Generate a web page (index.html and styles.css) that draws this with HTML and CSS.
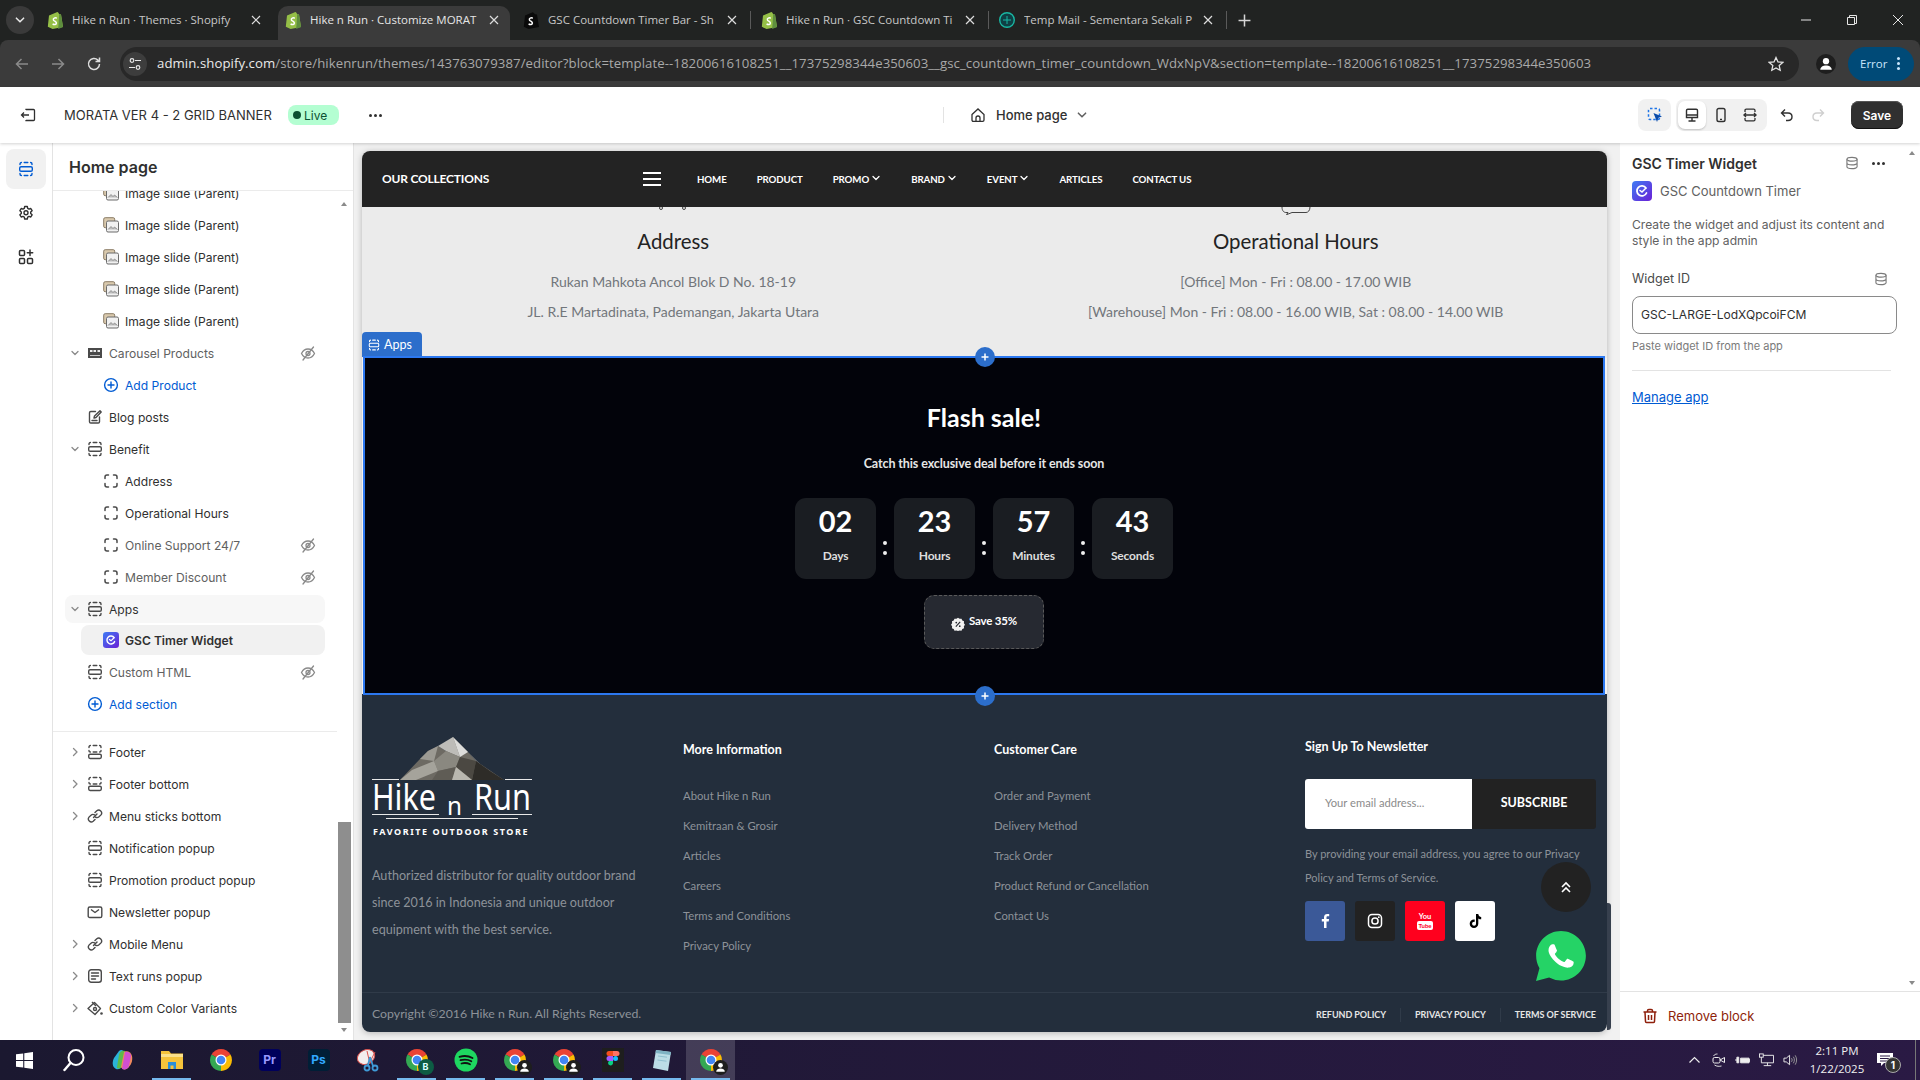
FILE: index.html
```html
<!DOCTYPE html>
<html lang="en">
<head>
<meta charset="utf-8">
<title>Hike n Run · Customize MORATA</title>
<link rel="stylesheet" href="styles.css">
</head>
<body>
<svg class="defs" aria-hidden="true">
  <symbol id="shop" viewBox="0 0 16 18"><path d="M2 4.500 9.800 1.200c.5-.2 1.200 0 1.600.5l.8 1.600 1.800.2L16 16 5.600 18 .8 15.800z" fill="#95bf47"/><path d="M12.200 3.300 14 3.500 16 16l-4.800 2z" fill="#5e8e3e"/><path d="M9.800 7.200C8 6.400 6 7.200 6.400 8.800c.3 1.400 3 1.500 3 3.200 0 1.500-2 1.900-3.800 1" fill="none" stroke="#fff" stroke-width="1.500"/></symbol>
  <symbol id="shopk" viewBox="0 0 16 18"><path d="M2 4.500 9.800 1.200l2.400 2.100 1.800.2L16 16 5.600 18 .8 15.800z" fill="#0a0a0a"/><path d="M9.800 7.200C8 6.400 6 7.200 6.400 8.800c.3 1.400 3 1.500 3 3.200 0 1.500-2 1.900-3.800 1" fill="none" stroke="#fff" stroke-width="1.500"/></symbol>
  <symbol id="x" viewBox="0 0 10 10"><path d="M1 1l8 8M9 1l-8 8" fill="none" stroke="currentColor" stroke-width="1.200"/></symbol>
  <symbol id="section" viewBox="0 0 16 16"><g fill="none" stroke="currentColor" stroke-width="1.400" stroke-linecap="round"><rect x="1.700" y="5.700" width="12.600" height="4.600" rx="1.400"/><path d="M2 3.500V3c0-1 .6-1.500 1.400-1.500M6.200 1.500h3.600M12.600 1.500c.8 0 1.400.5 1.400 1.500v.5M2 12.500v.5c0 1 .6 1.500 1.400 1.500M6.200 14.500h3.600M12.600 14.500c.8 0 1.400-.5 1.400-1.500v-.5"/></g></symbol>
  <symbol id="foot" viewBox="0 0 16 16"><g fill="none" stroke="currentColor" stroke-width="1.400" stroke-linecap="round"><rect x="1.700" y="10.200" width="12.600" height="4.300" rx="1.400"/><path d="M2 3.500V3c0-1 .6-1.500 1.400-1.500M6.200 1.500h3.600M12.600 1.500c.8 0 1.400.5 1.400 1.500v.5M2 6.500V7c0 .6.400 1 1.400 1M6.200 8h3.600M12.600 8c1 0 1.400-.4 1.400-1v-.5"/></g></symbol>
  <symbol id="block" viewBox="0 0 16 16"><path d="M5.500 2H4C2.800 2 2 2.800 2 4v1.500M10.500 2H12c1.200 0 2 .8 2 2v1.500M5.500 14H4c-1.200 0-2-.8-2-2v-1.500M10.500 14H12c1.200 0 2-.8 2-2v-1.500" fill="none" stroke="currentColor" stroke-width="1.500" stroke-linecap="round"/></symbol>
  <symbol id="imgs" viewBox="0 0 16 16"><rect x=".7" y=".7" width="11" height="10" rx="1.500" fill="#d9c9ad" stroke="#8a7c66"/><rect x="3.500" y="4" width="12" height="11" rx="1.500" fill="#f1f1f1" stroke="#6b6b6b"/><path d="M5 12.500l3-3 2 2 1.500-1.500 3 2.500" fill="#bbb" stroke="#777" stroke-width=".7"/></symbol>
  <symbol id="carousel" viewBox="0 0 16 16"><path d="M1 3h14v10H1z" fill="#4a4a4a"/><path d="M3 5h2.500v2H3zM6.500 5H9v2H6.500zM10.500 5H13v2h-2.500zM3 10h10v.8H3z" fill="#eee"/></symbol>
  <symbol id="plus" viewBox="0 0 16 16"><g fill="none" stroke="currentColor" stroke-width="1.400" stroke-linecap="round"><circle cx="8" cy="8" r="6.400"/><path d="M8 5v6M5 8h6"/></g></symbol>
  <symbol id="blog" viewBox="0 0 16 16"><g fill="none" stroke="currentColor" stroke-width="1.400" stroke-linecap="round" stroke-linejoin="round"><path d="M8.500 2.500H3.800c-.8 0-1.300.5-1.300 1.300v8.900c0 .8.500 1.300 1.300 1.300h7.400c.8 0 1.300-.5 1.300-1.300V8"/><path d="M7 9l.5-2L13 1.800l1.200 1.200L9 8.500zM5 11.500h5"/></g></symbol>
  <symbol id="eye" viewBox="0 0 16 16"><g fill="none" stroke="currentColor" stroke-width="1.300" stroke-linecap="round"><path d="M1.500 8.500C3 5.500 5.500 4 8 4s5 1.500 6.500 4.500C13 11.500 10.500 13 8 13S3 11.500 1.500 8.500z"/><circle cx="8" cy="8.500" r="2"/><path d="M13.500 2 3 15"/></g></symbol>
  <symbol id="chev" viewBox="0 0 10 10"><path d="M2 3.500 5 6.500 8 3.500" fill="none" stroke="currentColor" stroke-width="1.300" stroke-linecap="round" stroke-linejoin="round"/></symbol>
  <symbol id="chevr" viewBox="0 0 10 10"><path d="M3.500 1.500 7 5 3.500 8.500" fill="none" stroke="currentColor" stroke-width="1.300" stroke-linecap="round" stroke-linejoin="round"/></symbol>
  <symbol id="link" viewBox="0 0 16 16"><g fill="none" stroke="currentColor" stroke-width="1.400" stroke-linecap="round"><path d="M6.500 9.500 10 6"/><path d="M8 4.500l1.800-1.800a3 3 0 0 1 4.200 4.200L12 8.800a3 3 0 0 1-3.600.3"/><path d="M8 11.500l-1.800 1.800A3 3 0 0 1 2 9.100L4 7.200a3 3 0 0 1 3.600-.3"/></g></symbol>
  <symbol id="mail" viewBox="0 0 16 16"><g fill="none" stroke="currentColor" stroke-width="1.400" stroke-linejoin="round"><rect x="1.200" y="3" width="13.600" height="10.500" rx="1.600"/><path d="M4 5.500 8 8.500l4-3"/></g></symbol>
  <symbol id="text" viewBox="0 0 16 16"><g fill="none" stroke="currentColor" stroke-width="1.400" stroke-linecap="round"><rect x="1.700" y="1.700" width="12.600" height="12.600" rx="2.500"/><path d="M4.500 5h7M4.500 8h7M4.500 11h4"/></g></symbol>
  <symbol id="paint" viewBox="0 0 16 16"><g fill="none" stroke="currentColor" stroke-width="1.400" stroke-linejoin="round"><path d="M1 8.500 7.500 2.500l6 6L8 14.500z"/><path d="M5 2 9 6"/><circle cx="8" cy="9" r="1.500"/></g><circle cx="14.500" cy="13.500" r="1.300" fill="currentColor"/></symbol>
  <symbol id="gear" viewBox="0 0 16 16"><g fill="none" stroke="currentColor" stroke-width="1.400" stroke-linejoin="round"><path d="M6.700 1.500h2.600l.4 1.900 1.300.7 1.800-.6 1.300 2.200-1.400 1.300v1.500l1.400 1.300-1.300 2.200-1.800-.6-1.300.7-.4 1.900H6.700l-.4-1.900-1.300-.7-1.800.6-1.300-2.200L3.300 8.500V7L1.900 5.700l1.300-2.200 1.800.6 1.300-.7z"/><circle cx="8" cy="7.800" r="2"/></g></symbol>
  <symbol id="apps" viewBox="0 0 16 16"><g fill="none" stroke="currentColor" stroke-width="1.500" stroke-linecap="round"><rect x="1.500" y="1.500" width="5" height="5" rx="1"/><rect x="1.500" y="9.500" width="5" height="5" rx="1"/><rect x="9.500" y="9.500" width="5" height="5" rx="1"/><path d="M12 1v5.500M9.300 3.700h5.400"/></g></symbol>
  <symbol id="gsc" viewBox="0 0 20 20"><defs><linearGradient id="gscg" x1="0" y1="0" x2="1" y2="1"><stop offset="0" stop-color="#3f7cf4"/><stop offset="1" stop-color="#6a1fd6"/></linearGradient></defs><rect width="20" height="20" rx="4" fill="url(#gscg)"/><path d="M14 7a5 5 0 1 0 .5 5" fill="none" stroke="#fff" stroke-width="1.800" stroke-linecap="round"/><path d="M8 9.500 10 11l3.500-3.500" fill="none" stroke="#fff" stroke-width="1.500" stroke-linecap="round"/></symbol>
  <symbol id="db" viewBox="0 0 16 16"><g fill="none" stroke="currentColor" stroke-width="1.300"><ellipse cx="8" cy="3.700" rx="5.800" ry="2.200"/><path d="M2.200 3.700v8.600c0 1.200 2.600 2.200 5.800 2.200s5.800-1 5.800-2.200V3.700M2.200 8c0 1.200 2.600 2.200 5.800 2.200s5.800-1 5.800-2.200"/></g></symbol>
  <symbol id="chrome" viewBox="0 0 24 24"><path d="M12 12 2.500 6.500A11 11 0 0 1 21.500 6.500z" fill="#ea4335"/><path d="M12 12 21.500 6.500A11 11 0 0 1 12 23z" fill="#fbbc04"/><path d="M12 12V23A11 11 0 0 1 2.500 6.500z" fill="#34a853"/><circle cx="12" cy="12" r="5.500" fill="#fff"/><circle cx="12" cy="12" r="4.300" fill="#4285f4"/></symbol>
  <symbol id="badge" viewBox="0 0 14 14"><circle cx="7" cy="7" r="7" fill="#1e1e1e"/><circle cx="7" cy="5" r="2.200" fill="#fff"/><path d="M3 11c0-2 2-3 4-3s4 1 4 3z" fill="#fff"/></symbol>
  <symbol id="wa" viewBox="0 0 24 24"><path d="M12 0C5.400 0 .06 5.340.06 11.900c0 2.100.55 4.140 1.600 5.950L0 24l6.300-1.650a11.880 11.880 0 0 0 5.700 1.450c6.570 0 11.940-5.340 11.940-11.900C23.940 5.340 18.570 0 12 0z" fill="#25d366"/><path d="M17.472 14.382c-.297-.149-1.758-.867-2.030-.967-.273-.099-.471-.148-.67.15-.197.297-.767.966-.94 1.164-.173.199-.347.223-.644.075-.297-.15-1.255-.463-2.390-1.475-.883-.788-1.480-1.761-1.653-2.059-.173-.297-.018-.458.130-.606.134-.133.298-.347.446-.520.149-.174.198-.298.298-.497.099-.198.050-.371-.025-.520-.075-.149-.669-1.612-.916-2.207-.242-.579-.487-.500-.669-.510-.173-.008-.371-.010-.570-.010-.198 0-.520.074-.792.372-.272.297-1.040 1.016-1.040 2.479 0 1.462 1.065 2.875 1.213 3.074.149.198 2.096 3.200 5.077 4.487.709.306 1.262.489 1.694.625.712.227 1.360.195 1.871.118.571-.085 1.758-.719 2.006-1.413.248-.694.248-1.289.173-1.413-.074-.124-.272-.198-.570-.347" fill="#fff"/></symbol>
</svg>

<header class="chrome">
  <div class="tabstrip">
    <button class="tabmenu"><svg class="i10"><use href="#chev"/></svg></button>
    <div class="tab"><svg class="fav"><use href="#shop"/></svg><span class="tabt">Hike n Run · Themes · Shopify</span><svg class="tabx"><use href="#x"/></svg></div>
    <div class="tab active"><svg class="fav"><use href="#shop"/></svg><span class="tabt">Hike n Run · Customize MORAT</span><svg class="tabx"><use href="#x"/></svg></div>
    <div class="tab sep"><svg class="fav"><use href="#shopk"/></svg><span class="tabt">GSC Countdown Timer Bar - Sh</span><svg class="tabx"><use href="#x"/></svg></div>
    <div class="tab sep"><svg class="fav"><use href="#shop"/></svg><span class="tabt">Hike n Run · GSC Countdown Ti</span><svg class="tabx"><use href="#x"/></svg></div>
    <div class="tab sep"><svg class="fav" viewBox="0 0 16 16"><circle cx="8" cy="8" r="7.300" fill="#0f3f44" stroke="#19b7a3" stroke-width="1.400"/><path d="M4 8h8M8 4v8" stroke="#19b7a3"/></svg><span class="tabt">Temp Mail - Sementara Sekali P</span><svg class="tabx"><use href="#x"/></svg></div>
    <svg class="newtab" viewBox="0 0 12 12"><path d="M6 .5v11M.5 6h11" stroke="#d5d5d5" stroke-width="1.400"/></svg>
    <div class="winctl">
      <svg viewBox="0 0 12 12"><path d="M1 6h10" stroke="#e6e6e6"/></svg>
      <svg viewBox="0 0 12 12"><path d="M3.500 3.500V1.500h7v8h-2M1.500 3.500h7v7h-7z" fill="none" stroke="#e6e6e6"/></svg>
      <svg viewBox="0 0 12 12"><path d="M1 1l10 10M11 1 1 11" stroke="#e6e6e6"/></svg>
    </div>
  </div>
  <div class="toolbar">
    <svg class="nav-i dim" viewBox="0 0 16 16"><path d="M14 8H2.500M7.500 3l-5 5 5 5" fill="none" stroke="currentColor" stroke-width="1.500"/></svg>
    <svg class="nav-i dim" viewBox="0 0 16 16"><path d="M2 8h11.500M8.500 3l5 5-5 5" fill="none" stroke="currentColor" stroke-width="1.500"/></svg>
    <svg class="nav-i" viewBox="0 0 16 16"><path d="M13.500 8a5.500 5.500 0 1 1-1.600-3.900L13.500 5.500M13.500 1.500v4h-4" fill="none" stroke="currentColor" stroke-width="1.500"/></svg>
    <div class="omni">
      <span class="tune"><svg viewBox="0 0 14 14"><g fill="none" stroke="#e6e6e6" stroke-width="1.200"><circle cx="4" cy="3.500" r="1.800"/><path d="M7 3.500h6M1 10.500h6"/><circle cx="10" cy="10.500" r="1.800"/></g></svg></span>
      <span class="url"><b>admin.shopify.com</b>/store/hikenrun/themes/143763079387/editor?block=template--18200616108251__17375298344e350603__gsc_countdown_timer_countdown_WdxNpV&amp;section=template--18200616108251__17375298344e350603</span>
      <svg class="star" viewBox="0 0 16 16"><path d="M8 1.500l2 4.400 4.800.5-3.600 3.200 1 4.700L8 11.900l-4.200 2.400 1-4.700L1.200 6.400 6 5.900z" fill="none" stroke="#e3e3e3" stroke-width="1.300"/></svg>
    </div>
    <svg class="profile"><use href="#badge"/></svg>
    <div class="errpill"><span>Error</span><span class="vdots"></span></div>
  </div>
</header>

<div class="appbar">
  <svg class="exit" viewBox="0 0 16 16"><path d="M6 3V2.500h7.500c.6 0 1 .4 1 1v9c0 .6-.4 1-1 1H6V13M9 8H1.500M4 5.500 1.500 8 4 10.500" fill="none" stroke="#303030" stroke-width="1.300"/></svg>
  <span class="themename">MORATA VER 4 - 2 GRID BANNER</span>
  <span class="live"><i></i>Live</span>
  <span class="dots"><i></i><i></i><i></i></span>
  <span class="vrule"></span>
  <svg class="home" viewBox="0 0 16 16"><path d="M2 7.500 8 2l6 5.500V13c0 .8-.5 1.300-1.300 1.300H3.300C2.500 14.300 2 13.800 2 13zM6 14v-3c0-1.300.8-2 2-2s2 .7 2 2v3" fill="none" stroke="#303030" stroke-width="1.300"/></svg>
  <span class="pagename">Home page</span>
  <svg class="pagechev"><use href="#chev"/></svg>
  <div class="tools">
    <span class="tool-sel"><svg viewBox="0 0 16 16"><rect x="1.500" y="1.500" width="11" height="11" rx="1.500" fill="none" stroke="#1f75e8" stroke-width="1.500" stroke-dasharray="2.500 2"/><path d="M6.500 6 15 9.500l-3.500 1.200L10 15z" fill="#0b4ba8"/></svg></span>
    <span class="seg">
      <span class="seg-on"><svg viewBox="0 0 16 16"><path d="M2.500 3.500c0-.8.500-1.300 1.300-1.300h8.400c.8 0 1.300.5 1.300 1.300v7H2.500zM2.500 8h11M8 10.500v3M4.500 14h7" fill="none" stroke="#303030" stroke-width="1.400"/></svg></span>
      <span class="seg-i"><svg viewBox="0 0 16 16"><rect x="4" y="1.500" width="8" height="13" rx="1.800" fill="none" stroke="#303030" stroke-width="1.400"/><path d="M7 12.300h2" stroke="#303030" stroke-width="1.200"/></svg></span>
      <span class="seg-i"><svg viewBox="0 0 16 16"><path d="M3 5V3.500c0-.8.500-1.300 1.300-1.300h7.400c.8 0 1.300.5 1.300 1.300V5M3 11v1.500c0 .8.500 1.300 1.300 1.300h7.400c.8 0 1.300-.5 1.300-1.300V11M1.500 8h13M4 6 2 8l2 2M12 6l2 2-2 2" fill="none" stroke="#303030" stroke-width="1.300"/></svg></span>
    </span>
    <svg class="undo" viewBox="0 0 16 16"><path d="M6 2.500 2.500 6 6 9.500M3 6h6c2.500 0 4 1.500 4 3.800S11.500 13.500 9 13.500H7" fill="none" stroke="#303030" stroke-width="1.400"/></svg>
    <svg class="redo" viewBox="0 0 16 16"><path d="M10 2.500 13.500 6 10 9.500M13 6H7C4.500 6 3 7.500 3 9.800s1.500 3.700 4 3.700h2" fill="none" stroke="#cfcfcf" stroke-width="1.400"/></svg>
    <button class="save">Save</button>
  </div>
</div>

<main class="main">
  <nav class="rail">
    <span class="rail-on"><svg class="i16 blue"><use href="#section"/></svg></span>
    <span class="rail-i"><svg class="i16"><use href="#gear"/></svg></span>
    <span class="rail-i"><svg class="i16"><use href="#apps"/></svg></span>
  </nav>

  <aside class="sidebar">
    <h2 class="side-title">Home page</h2>
    <div class="tree">
      <div class="tree-in">
        <div class="row l2"><svg class="ic"><use href="#imgs"/></svg><span>Image slide (Parent)</span></div>
        <div class="row l2"><svg class="ic"><use href="#imgs"/></svg><span>Image slide (Parent)</span></div>
        <div class="row l2"><svg class="ic"><use href="#imgs"/></svg><span>Image slide (Parent)</span></div>
        <div class="row l2"><svg class="ic"><use href="#imgs"/></svg><span>Image slide (Parent)</span></div>
        <div class="row l2"><svg class="ic"><use href="#imgs"/></svg><span>Image slide (Parent)</span></div>
        <div class="row muted"><svg class="tw"><use href="#chev"/></svg><svg class="ic"><use href="#carousel"/></svg><span>Carousel Products</span><svg class="eye"><use href="#eye"/></svg></div>
        <div class="row l2 add"><svg class="ic"><use href="#plus"/></svg><span>Add Product</span></div>
        <div class="row l1"><svg class="ic"><use href="#blog"/></svg><span>Blog posts</span></div>
        <div class="row"><svg class="tw"><use href="#chev"/></svg><svg class="ic"><use href="#section"/></svg><span>Benefit</span></div>
        <div class="row l2"><svg class="ic"><use href="#block"/></svg><span>Address</span></div>
        <div class="row l2"><svg class="ic"><use href="#block"/></svg><span>Operational Hours</span></div>
        <div class="row l2 muted"><svg class="ic"><use href="#block"/></svg><span>Online Support 24/7</span><svg class="eye"><use href="#eye"/></svg></div>
        <div class="row l2 muted"><svg class="ic"><use href="#block"/></svg><span>Member Discount</span><svg class="eye"><use href="#eye"/></svg></div>
        <div class="row parent"><svg class="tw"><use href="#chev"/></svg><svg class="ic"><use href="#section"/></svg><span>Apps</span></div>
        <div class="row l2 current"><svg class="ic"><use href="#gsc"/></svg><span>GSC Timer Widget</span></div>
        <div class="row l1 muted"><svg class="ic"><use href="#section"/></svg><span>Custom HTML</span><svg class="eye"><use href="#eye"/></svg></div>
        <div class="row l1 add"><svg class="ic"><use href="#plus"/></svg><span>Add section</span></div>
        <hr class="tree-rule">
        <div class="row"><svg class="tw"><use href="#chevr"/></svg><svg class="ic"><use href="#foot"/></svg><span>Footer</span></div>
        <div class="row"><svg class="tw"><use href="#chevr"/></svg><svg class="ic"><use href="#foot"/></svg><span>Footer bottom</span></div>
        <div class="row"><svg class="tw"><use href="#chevr"/></svg><svg class="ic"><use href="#link"/></svg><span>Menu sticks bottom</span></div>
        <div class="row l1"><svg class="ic"><use href="#section"/></svg><span>Notification popup</span></div>
        <div class="row l1"><svg class="ic"><use href="#section"/></svg><span>Promotion product popup</span></div>
        <div class="row l1"><svg class="ic"><use href="#mail"/></svg><span>Newsletter popup</span></div>
        <div class="row"><svg class="tw"><use href="#chevr"/></svg><svg class="ic"><use href="#link"/></svg><span>Mobile Menu</span></div>
        <div class="row"><svg class="tw"><use href="#chevr"/></svg><svg class="ic"><use href="#text"/></svg><span>Text runs popup</span></div>
        <div class="row"><svg class="tw"><use href="#chevr"/></svg><svg class="ic"><use href="#paint"/></svg><span>Custom Color Variants</span></div>
      </div>
      <div class="sbar"><i class="up"></i><i class="thumb"></i><i class="down"></i></div>
    </div>
  </aside>

  <section class="preview">
    <div class="card">
      <div class="sitebar">
        <span class="brand">OUR COLLECTIONS</span>
        <span class="burger"><i></i><i></i><i></i></span>
        <ul class="sitenav">
          <li>HOME</li><li>PRODUCT</li>
          <li>PROMO<svg><use href="#chev"/></svg></li>
          <li>BRAND<svg><use href="#chev"/></svg></li>
          <li>EVENT<svg><use href="#chev"/></svg></li>
          <li>ARTICLES</li><li>CONTACT US</li>
        </ul>
      </div>

      <div class="benefit">
        <div class="bcol">
          <svg class="peek" viewBox="0 0 40 8"><g fill="none" stroke="#444"><circle cx="8" cy="1" r="1.500"/><circle cx="31" cy="1" r="1.500"/></g></svg>
          <h3>Address</h3>
          <p>Rukan Mahkota Ancol Blok D No. 18-19</p>
          <p>JL. R.E Martadinata, Pademangan, Jakarta Utara</p>
        </div>
        <div class="bcol">
          <svg class="peek" viewBox="0 0 40 8"><path d="M6 0c0 4 2 5.500 4 5.500H12l-1.500 2.200 5.500-2.200H30c2 0 4-2 4-5.500" fill="none" stroke="#444"/></svg>
          <h3>Operational Hours</h3>
          <p>[Office] Mon - Fri : 08.00 - 17.00 WIB</p>
          <p>[Warehouse] Mon - Fri : 08.00 - 16.00 WIB, Sat : 08.00 - 14.00 WIB</p>
        </div>
      </div>

      <div class="timer">
        <span class="apps-tag"><svg viewBox="0 0 16 16"><use href="#section"/></svg>Apps</span>
        <span class="addbtn top"><svg viewBox="0 0 10 10"><path d="M5 1.500v7M1.500 5h7" stroke="#fff" stroke-width="1.500"/></svg></span>
        <span class="addbtn bottom"><svg viewBox="0 0 10 10"><path d="M5 1.500v7M1.500 5h7" stroke="#fff" stroke-width="1.500"/></svg></span>
        <span class="selbox"></span>
        <h2 class="flash">Flash sale!</h2>
        <p class="catch">Catch this exclusive deal before it ends soon</p>
        <div class="count">
          <div class="cbox"><b>02</b><span>Days</span></div><i class="colon"></i>
          <div class="cbox"><b>23</b><span>Hours</span></div><i class="colon"></i>
          <div class="cbox"><b>57</b><span>Minutes</span></div><i class="colon"></i>
          <div class="cbox"><b>43</b><span>Seconds</span></div>
        </div>
        <div class="savebtn"><svg viewBox="0 0 16 16"><path d="M8 .8l1.800 1.300 2.200-.2.900 2 2 .9-.2 2.200L16 8.800l-1.300 1.800.2 2.200-2 .9-.9 2-2.200-.2L8 16l-1.800-.5-2.200.2-.9-2-2-.9.2-2.200L0 8.800l1.300-1.800-.2-2.200 2-.9.9-2 2.200.2z" fill="#f2f2f2"/><path d="M5.500 11 10.500 5.500" stroke="#262931" stroke-width="1.300"/><circle cx="6" cy="6.300" r="1" fill="#262931"/><circle cx="10" cy="10.500" r="1" fill="#262931"/></svg><span>Save 35%</span></div>
      </div>

      <footer class="sitefoot">
        <div class="fgrid">
          <div class="fabout">
            <svg class="logo" viewBox="0 0 160 104">
              <path d="M28 43 48 22 56 14 66 9 74 14 81 0 96 15 104 24 132 43z" fill="#6d6a63"/>
              <path d="M66 9 81 0 88 20 74 14z" fill="#bdbcb8"/><path d="M81 0 96 15 88 20z" fill="#dcdcda"/><path d="M56 14 66 9 62 24 48 22z" fill="#9c9a93"/>
              <path d="M62 24 74 14 88 20 84 30 66 34z" fill="#8a8880"/><path d="M88 20 104 24 100 43 84 30z" fill="#4b4842"/><path d="M96 15 110 29 104 24z" fill="#888"/><path d="M104 24 118 34 132 43H100z" fill="#2e2c28"/><path d="M40 33 62 24 66 34 44 43H28z" fill="#a5a39b"/><path d="M66 34 84 30 80 43H60z" fill="#5f5c55"/><path d="M84 30 100 43H80z" fill="#b9b7af"/>
              <path d="M0 42.500h27M133 42.500h27M0 77.500h67M100 77.500h60M14 81.500h132" stroke="#e8e8e8" stroke-width="1"/>
              <text class="lg-main" x="0" y="73" textLength="64" lengthAdjust="spacingAndGlyphs">Hike</text><text class="lg-n" x="75" y="78" textLength="15" lengthAdjust="spacingAndGlyphs">n</text><text class="lg-main" x="102" y="73" textLength="57" lengthAdjust="spacingAndGlyphs">Run</text>
              <text class="lg-sub" x="1" y="98" textLength="156">FAVORITE OUTDOOR STORE</text>
            </svg>
            <p>Authorized distributor for quality outdoor brand since 2016 in Indonesia and unique outdoor equipment with the best service.</p>
          </div>
          <div class="fcol">
            <h4>More Information</h4>
            <ul><li>About Hike n Run</li><li>Kemitraan &amp; Grosir</li><li>Articles</li><li>Careers</li><li>Terms and Conditions</li><li>Privacy Policy</li></ul>
          </div>
          <div class="fcol">
            <h4>Customer Care</h4>
            <ul><li>Order and Payment</li><li>Delivery Method</li><li>Track Order</li><li>Product Refund or Cancellation</li><li>Contact Us</li></ul>
          </div>
          <div class="fnews">
            <h4>Sign Up To Newsletter</h4>
            <div class="subform"><span class="ph">Your email address...</span><span class="subbtn">SUBSCRIBE</span></div>
            <p>By providing your email address, you agree to our Privacy Policy and Terms of Service.</p>
            <div class="social">
              <span class="s-fb"><svg viewBox="0 0 16 16"><path d="M9.500 15V8.600h2.200l.4-2.500H9.500V4.500c0-.8.300-1.300 1.400-1.300h1.300V1c-.4 0-1.100-.1-1.900-.1-2 0-3.300 1.200-3.300 3.300v1.900H4.800v2.500H7V15z" fill="#fff"/></svg></span>
              <span class="s-ig"><svg viewBox="0 0 16 16"><g fill="none" stroke="#fff" stroke-width="1.500"><rect x="1.500" y="1.500" width="13" height="13" rx="3.500"/><circle cx="8" cy="8" r="3.100"/></g><circle cx="11.800" cy="4.200" r=".9" fill="#fff"/></svg></span>
              <span class="s-yt"><em>You</em><strong>Tube</strong></span>
              <span class="s-tt"><svg viewBox="0 0 16 16"><path d="M9 1h2.300c.2 1.700 1.200 2.800 2.900 3v2.300c-1.100 0-2.100-.3-2.900-.9v5.300c0 2.600-2 4.300-4.300 4.300-2.500 0-4.300-2-4.300-4.300 0-2.600 2.200-4.600 5-4.200v2.400c-1.400-.4-2.600.6-2.600 1.800 0 1.100.9 2 2 2 1.200 0 1.900-.9 1.900-2z" fill="#000"/></svg></span>
            </div>
          </div>
        </div>
        <div class="fbottom">
          <span>Copyright ©2016 Hike n Run. All Rights Reserved.</span>
          <ul><li>REFUND POLICY</li><li>PRIVACY POLICY</li><li>TERMS OF SERVICE</li></ul>
        </div>
        <span class="totop"><svg viewBox="0 0 14 14"><path d="M3 7l4-4 4 4M3 12l4-4 4 4" fill="none" stroke="#fff" stroke-width="1.600"/></svg></span>
        <svg class="whats"><use href="#wa"/></svg>
      </footer>
      <span class="pagebar"></span>
    </div>
  </section>

  <aside class="inspector">
    <div class="ins-body">
      <div class="ins-head"><h3>GSC Timer Widget</h3><svg class="i14 grey"><use href="#db"/></svg><span class="dots"><i></i><i></i><i></i></span></div>
      <div class="ins-app"><svg class="i20"><use href="#gsc"/></svg><span>GSC Countdown Timer</span></div>
      <p class="ins-desc">Create the widget and adjust its content and style in the app admin</p>
      <div class="ins-label"><span>Widget ID</span><svg class="i14 grey"><use href="#db"/></svg></div>
      <div class="ins-input">GSC-LARGE-LodXQpcoiFCM</div>
      <p class="ins-help">Paste widget ID from the app</p>
      <hr class="ins-rule">
      <a class="ins-link">Manage app</a>
      <i class="arrow-up"></i><i class="arrow-down"></i>
    </div>
    <div class="ins-foot"><svg viewBox="0 0 16 16"><path d="M1.500 4h13M5.500 4V2.800c0-.8.500-1.300 1.300-1.300h2.400c.8 0 1.300.5 1.300 1.300V4M3 4l.5 9.500c0 .6.500 1 1 1h7c.5 0 1-.4 1-1L13 4M6.500 7v5M9.500 7v5" fill="none" stroke="#8e1f0b" stroke-width="1.500"/></svg><span>Remove block</span></div>
  </aside>
</main>

<footer class="taskbar">
  <span class="tb"><svg class="win" viewBox="0 0 16 16"><path d="M0 2.200 6.800 1.300V7.500H0zM7.800 1.100 16 0V7.500H7.800zM0 8.500H6.800V14.700L0 13.800zM7.800 8.500H16V16L7.800 14.900z" fill="#fff"/></svg></span>
  <span class="tb"><svg class="t24" viewBox="0 0 24 24"><circle cx="14" cy="9.500" r="7.500" fill="none" stroke="#fff" stroke-width="2"/><path d="M8.500 15 2.500 22" stroke="#fff" stroke-width="2.400" stroke-linecap="round"/></svg></span>
  <span class="tb"><svg class="t24" viewBox="0 0 24 24"><path d="M8 3c2-2 5-1 5 2l-2 12c-.5 3-3 5-6 4-4-2-4-7-2-11z" fill="#2bb3d9"/><path d="M6 19 8 7c.5-3 3-5 6-4l1 1-3 13c-.5 3-3 4-6 3z" fill="#5dbb4a"/><path d="M13 4c3-2 7 0 8 4 1 5-1 9-4 12-2 2-6 2-7-1z" fill="#f08a5d"/><path d="M14 4c3-1 6 1 6 4l-2 10c-1 3-4 4-7 3z" fill="#d14fd0"/></svg></span>
  <span class="tb on"><svg class="t24" viewBox="0 0 24 24"><path d="M1 3h8l2 2.500h12V21H1z" fill="#f5c33b"/><path d="M1 6h22v3H1z" fill="#fbe08a"/><path d="M8 14h8v7h-2.500v-3.500h-3V21H8z" fill="#2a8fd8"/></svg></span>
  <span class="tb"><svg class="t24"><use href="#chrome"/></svg></span>
  <span class="tb"><span class="adobe pr">Pr</span></span>
  <span class="tb"><span class="adobe ps">Ps</span></span>
  <span class="tb"><svg class="t24" viewBox="0 0 24 24"><ellipse cx="10" cy="9" rx="9" ry="7" fill="#f3eeee" stroke="#d9534f" transform="rotate(-25 10 9)"/><path d="M11 3l3 13M19 4 13 16" stroke="#d9534f" fill="none"/><g fill="none" stroke="#3f9ad6" stroke-width="1.800"><circle cx="11" cy="20" r="2.500"/><circle cx="19" cy="20" r="2.500"/><path d="M14 9l3 9M14 9l-2 8"/></g></svg></span>
  <span class="tb on"><span class="tbw"><svg class="t24"><use href="#chrome"/></svg><span class="tbadge green">B</span></span></span>
  <span class="tb on"><svg class="t24" viewBox="0 0 24 24"><circle cx="12" cy="12" r="11.500" fill="#1ed760"/><path d="M5.500 8.800c4.500-1.300 9-1 13 1.200M6.500 12.200c3.800-1 7.500-.8 10.800 1M7.500 15.500c3-.8 6-.6 8.500.8" fill="none" stroke="#111" stroke-width="1.800" stroke-linecap="round"/></svg></span>
  <span class="tb on"><span class="tbw"><svg class="t24"><use href="#chrome"/></svg><svg class="tprof"><use href="#badge"/></svg></span></span>
  <span class="tb on"><span class="tbw"><svg class="t24"><use href="#chrome"/></svg><svg class="tprof"><use href="#badge"/></svg></span></span>
  <span class="tb on"><svg class="t24" viewBox="0 0 24 24"><rect x="1" y="0" width="22" height="24" fill="#1e1e1e"/><path d="M8 3h4v5H8a2.500 2.500 0 0 1 0-5z" fill="#f24e1e"/><path d="M12 3h4a2.500 2.500 0 0 1 0 5h-4z" fill="#ff7262"/><path d="M8 8h4v5H8a2.500 2.500 0 0 1 0-5z" fill="#a259ff"/><circle cx="14.500" cy="10.500" r="2.500" fill="#1abcfe"/><path d="M8 13h4v2.500a2.500 2.500 0 1 1-4-2.500z" fill="#0acf83"/></svg></span>
  <span class="tb on"><svg class="t24" viewBox="0 0 24 24"><path d="M6 2 21 4 18 23 3 20z" fill="#bcdde6"/><path d="M6 2 21 4 20.500 7 5.500 5z" fill="#7fb3c4"/><path d="M8 8l9 1.200M7.500 12l9 1.200" stroke="#8fc0cf"/></svg></span>
  <span class="tb on act"><span class="tbw"><svg class="t24"><use href="#chrome"/></svg><svg class="tprof"><use href="#badge"/></svg></span></span>
  <span class="tray">
    <svg viewBox="0 0 14 14"><path d="M2 9.500 7 4.500l5 5" fill="none" stroke="#eee" stroke-width="1.200"/></svg>
    <svg viewBox="0 0 14 14"><path d="M2 3c1-1.500 2-2 4-2M10 13c-2 .5-5 .5-7-1" fill="none" stroke="#ddd"/><rect x="1.500" y="4.500" width="7" height="5.500" rx="1.500" fill="none" stroke="#eee"/><path d="M8.500 7 13 4.500v5z" fill="none" stroke="#eee"/></svg>
    <svg viewBox="0 0 16 14"><path d="M0 7h2M2 4h2v6H2zM6 5h9v5H6z" fill="#eee" stroke="#eee"/><path d="M15.500 6v3" stroke="#eee"/></svg>
    <svg viewBox="0 0 16 14"><path d="M2.500 2h13v8h-13zM9 10v3M5 13h8" fill="none" stroke="#eee"/><rect x=".5" y=".5" width="4" height="3.500" fill="#2a1a44" stroke="#eee"/></svg>
    <svg viewBox="0 0 16 14"><path d="M1 5h2.500L7 2v10L3.500 9H1z" fill="none" stroke="#eee"/><path d="M9 5c1 1 1 3 0 4M11 3.500c1.500 2 1.500 5 0 7M13 2c2 3 2 7 0 10" fill="none" stroke="#999"/></svg>
  </span>
  <span class="clock"><span>2:11 PM</span><span>1/22/2025</span></span>
  <span class="notif"><svg viewBox="0 0 16 16"><path d="M0 1h16v10H7l-3 3v-3H0z" fill="#fff"/><path d="M3 4h10M3 6.500h10M3 9h7" stroke="#2a1a44"/></svg><b>1</b></span>
  <span class="showdesk"></span>
</footer>
</body>
</html>
```
FILE: styles.css
```css
* { box-sizing: border-box; }
html, body { margin: 0; height: 100%; }
body { width: 1920px; height: 1080px; overflow: hidden; display: flex; flex-direction: column; font-family: "Inter", "Liberation Sans", sans-serif; background: #fff; color: #303030; }
h2, h3, h4, p, ul { margin: 0; padding: 0; }
ul { list-style: none; }
svg { display: block; flex: none; }
.defs { position: absolute; width: 0; height: 0; }

/* browser chrome */
.chrome { height: 87px; background: #212322; flex: none; }
.tabstrip { height: 40px; display: flex; padding-left: 6px; align-items: flex-end; position: relative; }
.tabmenu { width: 28px; height: 28px; margin: 0 6px 6px 0; border: 0; border-radius: 50%; background: #3a3a3a; color: #e8e8e8; display: flex; align-items: center; justify-content: center; padding: 0; }
.i10 { width: 12px; height: 12px; }
.tab { width: 238px; height: 34px; display: flex; align-items: center; padding: 0 0 6px 7px; color: #c7c7c7; font: 11.500px/16px "Open Sans", "Liberation Sans", sans-serif; position: relative; }
.tab.active { background: #3b3b3b; border-radius: 10px 10px 0 0; width: 232px; margin-right: 6px; color: #e6e6e6; }
.tab.sep::after { content: ""; position: absolute; right: 3px; top: 5px; height: 18px; width: 1px; background: #5a5a5a; }
.fav { width: 16px; height: 18px; margin-right: 9px; }
.tabt { width: 173px; white-space: nowrap; overflow: hidden; }
.tabx { width: 10px; height: 10px; margin-left: 6px; color: #ddd; }
.newtab { width: 13px; height: 13px; margin: 0 0 13px 8px; }
.winctl { margin-left: auto; display: flex; gap: 34px; padding: 0 16px 14px 0; }
.winctl svg { width: 12px; height: 12px; }
.toolbar { height: 47px; background: #3b3b3b; display: flex; align-items: center; padding-left: 14px; border-radius: 8px 8px 0 0; }
.nav-i { width: 16px; height: 16px; margin-right: 20px; color: #dedede; }
.nav-i.dim { color: #8a8a8a; }
.omni { margin-left: -2px; width: 1679px; height: 34px; border-radius: 17px; background: #282828; display: flex; align-items: center; padding-left: 3px; }
.tune { width: 24px; height: 24px; border-radius: 50%; background: #3d3d3d; display: flex; align-items: center; justify-content: center; margin-right: 10px; }
.tune svg { width: 14px; height: 14px; }
.url { color: #a9a9a9; font: 13.200px/18px "Open Sans", "Liberation Sans", sans-serif; white-space: nowrap; letter-spacing: .005em; margin-top: -1px; }
.url b { font-weight: 400; color: #eaeaea; }
.star { width: 16px; height: 16px; margin-left: auto; margin-right: 15px; }
.profile { width: 20px; height: 20px; margin-left: 17px; }
.errpill { margin-left: 12px; width: 66px; height: 34px; border-radius: 17px; background: #004a77; color: #c9e6fc; font: 11.500px "Open Sans", sans-serif; display: flex; align-items: center; padding-left: 12px; justify-content: space-between; padding-right: 14px; }
.vdots { width: 3px; height: 3px; border-radius: 50%; background: #c9e6fc; box-shadow: 0 -5px #c9e6fc, 0 5px #c9e6fc; }

/* app bar */
.appbar { height: 56px; flex: none; display: flex; align-items: center; padding-left: 20px; position: relative; z-index: 2; box-shadow: 0 1px 3px rgba(0,0,0,.18); background: #fff; font-size: 13px; }
.exit { width: 16px; height: 16px; }
.themename { margin-left: 28px; width: 208px; white-space: nowrap; font-size: 13px; }
.live { margin-left: 16px; height: 20px; width: 51px; border-radius: 8px; background: #b4fed2; color: #0c5132; display: flex; align-items: center; font-size: 12px; padding-left: 5px; gap: 3px; }
.live i { width: 8px; height: 8px; border-radius: 50%; background: #0c5132; }
.dots { display: flex; gap: 2px; }
.dots i { width: 3px; height: 3px; border-radius: 50%; background: #303030; }
.appbar > .dots { margin-left: 30px; }
.vrule { width: 1px; height: 16px; background: #e3e3e3; margin-left: 561px; }
.home { width: 16px; height: 16px; margin-left: 26px; }
.pagename { margin-left: 10px; width: 71px; white-space: nowrap; font-weight: 500; font-size: 13px; }
.pagechev { width: 12px; height: 12px; margin-left: 9px; color: #616161; }
.tools { margin-left: auto; display: flex; align-items: center; padding-right: 17px; }
.tool-sel { width: 33px; height: 32px; background: #f1f1f1; border-radius: 8px; display: flex; align-items: center; justify-content: center; }
.tool-sel svg, .seg svg { width: 16px; height: 16px; }
.seg { margin-left: 5px; width: 91px; height: 32px; background: #f1f1f1; border-radius: 8px; display: flex; align-items: center; padding: 2px; }
.seg-on { width: 28px; height: 28px; background: #fff; border-radius: 7px; box-shadow: 0 1px 2px rgba(0,0,0,.2); display: flex; align-items: center; justify-content: center; }
.seg-i { width: 30px; display: flex; justify-content: center; }
.undo, .redo { width: 16px; height: 16px; }
.undo { margin-left: 12px; }
.redo { margin-left: 15px; }
.save { margin-left: 25px; width: 52px; height: 28px; border: 0; border-radius: 8px; background: #303030; box-shadow: inset 0 1px 0 #555, inset 0 -1px 0 #111; color: #fff; font: 600 12px "Inter", sans-serif; padding: 0; }

/* main */
.main { height: 897px; flex: none; display: flex; background: #f1f1f1; }
.rail { width: 53px; background: #fff; border-right: 1px solid #e3e3e3; display: flex; flex-direction: column; align-items: center; padding-top: 6px; gap: 4px; }
.rail-on, .rail-i { width: 40px; height: 40px; border-radius: 8px; display: flex; align-items: center; justify-content: center; }
.rail-on { background: #f1f1f1; }
.i16 { width: 16px; height: 16px; }
.blue { color: #005bd3; }

.sidebar { width: 301px; background: #fff; border-right: 1px solid #e3e3e3; display: flex; flex-direction: column; }
.side-title { height: 48px; padding-left: 16px; font-size: 16px; line-height: 48px; font-weight: 600; border-bottom: 1px solid #ebebeb; flex: none; }
.tree { flex: 1; position: relative; overflow: hidden; font-size: 12.100px; color: #303030; }
.tree-in { margin-top: -14px; }
.row { height: 32px; margin: 0 28px 0 12px; display: flex; align-items: center; white-space: nowrap; }
.row span { flex: 1; }
.tw { width: 10px; height: 10px; margin: 0 5px; color: #8a8a8a; }
.ic { width: 16px; height: 16px; margin: 0 6px 0 2px; color: #4a4a4a; }
.row .tw + .ic { margin-left: 2px; margin-right: 6px; }
.l1 { padding-left: 20px; }
.l2 { padding-left: 36px; }
.muted { color: #616161; }
.add { color: #005bd3; }
.add .ic { color: #005bd3; }
.eye { width: 16px; height: 16px; color: #8a8a8a; margin-right: 9px; }
.parent { height: 28px; margin-top: 2px; margin-bottom: 2px; background: #f7f7f7; border-radius: 8px; }
.current { height: 30px; margin: 1px 28px 1px 28px; padding-left: 20px; background: #f1f1f1; border-radius: 8px; font-weight: 600; }
.tree-rule { border: 0; border-top: 1px solid #ebebeb; margin: 11px 16px 4px 0; height: 0; }
.sbar { position: absolute; right: 2px; top: 0; bottom: 0; width: 13px; }
.sbar i { position: absolute; display: block; }
.thumb { left: 0; width: 13px; top: 631px; height: 201px; background: #8e8e8e; }
.up { left: 3px; top: 8px; border: 3.500px solid transparent; border-bottom: 4px solid #8a8a8a; }
.down { left: 3px; bottom: 5px; border: 3.500px solid transparent; border-top: 4px solid #8a8a8a; }

/* preview */
.preview { width: 1266px; padding: 8px 0 8px 8px; }
.card { width: 1245px; height: 881px; position: relative; box-shadow: 0 1px 6px rgba(0,0,0,.25); border-radius: 8px; font-family: "Lato", "Liberation Sans", sans-serif; }
.sitebar { height: 56px; background: #232323; color: #fff; display: flex; align-items: center; padding: 0 0 1px 20px; border-radius: 8px 8px 0 0; }
.brand { width: 261px; font-size: 12px; font-weight: 700; letter-spacing: -.2px; white-space: nowrap; }
.burger { width: 18px; display: flex; flex-direction: column; gap: 4px; margin-right: 36px; }
.burger i { height: 2px; background: #fff; }
.sitenav { display: flex; gap: 30px; font-size: 9.700px; font-weight: 700; }
.sitenav li { display: flex; white-space: nowrap; letter-spacing: -.1px; }
.sitenav svg { width: 10px; height: 10px; margin: 0 0 0 2px; color: #fff; }
.benefit { height: 151px; background: #ebebeb; display: grid; grid-template-columns: 1fr 1fr; }
.bcol { display: flex; flex-direction: column; align-items: center; color: #72767b; font-size: 14px; line-height: 30px; }
.peek { width: 40px; height: 8px; }
.bcol h3 { margin: 12px 0 12px; font-size: 20.400px; line-height: 28px; font-weight: 400; color: #232323; }
.timer { height: 336px; margin: 0 2px; padding-right: 1px; background: #02030a; position: relative; display: flex; flex-direction: column; align-items: center; color: #fff; }
.apps-tag { position: absolute; left: -2px; top: -26px; height: 25px; width: 60px; background: #2c6ecb; color: #fff; border-radius: 4px 4px 0 0; display: flex; align-items: center; gap: 4px; font-size: 12.500px; padding-left: 6px; z-index: 3; }
.apps-tag svg { width: 12px; height: 12px; }
.addbtn { position: absolute; left: 611px; width: 20px; height: 20px; border-radius: 50%; background: #2c6ecb; z-index: 4; display: flex; align-items: center; justify-content: center; }
.addbtn svg { width: 10px; height: 10px; }
.addbtn.top { top: -11px; }
.addbtn.bottom { bottom: -12px; }
.selbox { position: absolute; left: -1px; right: 0; top: -2px; bottom: -1px; border: 2px solid #2c78f0; z-index: 3; }
.flash { margin-top: 44px; font-size: 25px; line-height: 30px; font-weight: 700; }
.catch { margin-top: 23px; font-size: 12.500px; line-height: 18px; font-weight: 700; letter-spacing: -.1px; color: #e6e6e6; }
.count { margin-top: 25px; display: flex; align-items: center; }
.cbox { width: 81px; height: 81px; background: #1a1d22; border-radius: 11px; display: flex; flex-direction: column; align-items: center; padding-top: 5px; }
.cbox b { font-size: 29px; line-height: 36px; }
.cbox span { margin-top: 8px; font-size: 12px; line-height: 18px; letter-spacing: -.2px; font-weight: 700; color: #ddd; }
.colon { width: 18px; position: relative; height: 14px; top: 9px; }
.colon::before, .colon::after { content: ""; position: absolute; left: 7px; width: 4px; height: 4px; border-radius: 50%; background: #eee; }
.colon::before { top: 0; }
.colon::after { bottom: 0; }
.savebtn { margin-top: 16px; width: 120px; height: 54px; background: #262931; border: 1px dashed #5a5a5a; border-radius: 10px; display: flex; align-items: center; justify-content: center; gap: 4px; font-size: 11.500px; font-weight: 700; letter-spacing: -.2px; }
.savebtn svg { width: 14px; height: 14px; margin-top: 3px; }
.savebtn span { margin-top: -3px; }
.sitefoot { height: 338px; background: #232e3c; position: relative; color: #8d9299; border-radius: 0 0 8px 8px; }
.fgrid { height: 298px; display: grid; grid-template-columns: 311px 311px 311px 1fr; padding-left: 10px; }
.fabout { padding-top: 43px; }
.logo { width: 160px; height: 104px; margin-bottom: 21px; overflow: visible; }
.lg-main { font: 400 36px "Noto Sans", sans-serif; fill: #fff; }
.lg-n { font: 400 26px "Noto Sans", sans-serif; fill: #fff; }
.lg-sub { font: 700 9px "Noto Sans", sans-serif; fill: #fff; letter-spacing: 1.550px; }
.fabout p { width: 275px; font-size: 12.600px; line-height: 27px; }
.fcol { padding-top: 46px; }
.fcol h4, .fnews h4 { font-size: 12.500px; line-height: 20px; font-weight: 700; color: #fff; margin-bottom: 21px; }
.fcol li { font-size: 11.300px; line-height: 30px; }
.fnews { padding-top: 43px; padding-right: 11px; }
.fnews h4 { margin-bottom: 22px; }
.subform { display: flex; height: 50px; border-radius: 3px; overflow: hidden; }
.ph { width: 167px; background: #fff; color: #8b8b8b; font-size: 11.200px; display: flex; align-items: center; padding: 0 0 3px 20px; white-space: nowrap; }
.subbtn { flex: 1; background: #222; color: #fff; font-size: 12.500px; font-weight: 700; display: flex; align-items: center; justify-content: center; padding-bottom: 3px; }
.fnews p { margin-top: 13px; font-size: 11px; line-height: 24px; }
.social { margin-top: 11px; display: flex; gap: 10px; }
.social span { width: 40px; height: 40px; border-radius: 3px; display: flex; flex-direction: column; align-items: center; justify-content: center; }
.social svg { width: 16px; height: 16px; }
.s-fb { background: #3b5998; }
.s-ig { background: #222; }
.s-yt { background: #ff001e; color: #fff; }
.s-yt em { font: 700 7.500px/8px "Lato", sans-serif; }
.s-yt strong { background: #fff; color: #ff001e; border-radius: 2px; font: 700 6px/9px "Lato", sans-serif; padding: 0 1px; }
.s-tt { background: #fff; }
.fbottom { height: 40px; border-top: 1px solid #303b49; display: flex; align-items: center; justify-content: space-between; padding: 1px 11px 0 10px; font-size: 12.300px; }
.fbottom ul { display: flex; margin-top: 3px; font-size: 9px; font-weight: 700; color: #e6e6e6; letter-spacing: -.05px; }
.fbottom li { padding: 0 14px; line-height: 14px; }
.fbottom li:last-child { padding-right: 0; }
.fbottom li + li { border-left: 1px solid #303b49; }
.totop { position: absolute; left: 1179px; top: 168px; width: 50px; height: 50px; border-radius: 50%; background: #222; display: flex; align-items: center; justify-content: center; }
.totop svg { width: 14px; height: 14px; }
.whats { position: absolute; left: 1174px; top: 237px; width: 50px; height: 50px; }
.pagebar { position: absolute; right: -4px; top: 752px; width: 4px; height: 127px; background: #37404e; border-radius: 0 3px 3px 0; }

/* inspector */
.inspector { width: 300px; background: #fff; display: flex; flex-direction: column; }
.ins-body { flex: 1; padding: 10px 23px 0 12px; position: relative; }
.ins-head { display: flex; align-items: center; height: 20px; }
.ins-head h3 { flex: 1; font-size: 14px; font-weight: 600; }
.ins-head .dots { margin: 0 12px 0 13px; }
.i14 { width: 14px; height: 14px; }
.grey { color: #7a7a7a; }
.ins-app { display: flex; align-items: center; gap: 8px; margin-top: 6px; height: 24px; color: #616161; font-size: 13px; }
.i20 { width: 20px; height: 20px; }
.ins-desc { margin-top: 14px; font-size: 12.100px; line-height: 16px; color: #616161; }
.ins-label { margin-top: 20px; display: flex; justify-content: space-between; padding-right: 9px; font-size: 12.500px; line-height: 20px; color: #4a4a4a; align-items: center; }
.ins-input { margin-top: 7px; height: 38px; width: 265px; border: 1px solid #8a8a8a; border-radius: 8px; font-size: 12.050px; line-height: 36px; padding-left: 8px; color: #303030; }
.ins-help { margin-top: 5px; font-size: 11px; line-height: 14px; color: #7a7a7a; }
.ins-rule { border: 0; border-top: 1px solid #e3e3e3; margin: 17px 6px 0 0; }
.ins-link { display: block; margin-top: 17px; font-size: 13px; line-height: 18px; color: #005bd3; text-decoration: underline; }
.arrow-up, .arrow-down { position: absolute; right: 5px; border: 3.500px solid transparent; }
.arrow-up { top: 5px; border-bottom: 4px solid #8a8a8a; }
.arrow-down { bottom: 3px; border-top: 4px solid #8a8a8a; }
.ins-foot { height: 49px; border-top: 1px solid #e3e3e3; display: flex; align-items: center; padding-left: 22px; gap: 10px; color: #8e1f0b; font-size: 13px; }
.ins-foot svg { width: 16px; height: 16px; }

/* taskbar */
.taskbar { height: 40px; flex: none; display: flex; align-items: center; background: linear-gradient(90deg, #1b1830, #2a1a44); color: #fff; position: relative; }
.tb { width: 49px; height: 40px; display: flex; align-items: center; justify-content: center; position: relative; flex: none; }
.on::after { content: ""; position: absolute; left: 5px; right: 5px; bottom: 0; height: 2px; background: #76b9ed; }
.act { background: rgba(255,255,255,.16); }
.win { width: 17px; height: 17px; }
.t24 { width: 24px; height: 24px; }
.adobe { width: 22px; height: 22px; border-radius: 4px; font: 700 12px/22px "Inter", sans-serif; text-align: center; }
.pr { background: #00005b; color: #9999ff; }
.ps { background: #001e36; color: #31a8ff; }
.tbw { position: relative; display: block; }
.tbadge { position: absolute; right: -5px; bottom: -3px; width: 16px; height: 16px; border-radius: 50%; font: 700 9px/16px "Inter", sans-serif; text-align: center; }
.green { background: #0d5c44; color: #dff; }
.tprof { position: absolute; right: -5px; bottom: -3px; width: 15px; height: 15px; }
.tray { margin-left: auto; display: flex; align-items: center; gap: 9px; }
.tray svg { width: 15px; height: 14px; }
.clock { margin-left: 8px; width: 62px; display: flex; flex-direction: column; align-items: center; font: 11.500px/18px "Open Sans", sans-serif; color: #f0f0f0; }
.notif { margin-left: 9px; position: relative; width: 18px; }
.notif svg { width: 16px; height: 16px; }
.notif b { position: absolute; left: 8px; top: 5px; width: 16px; height: 16px; border-radius: 50%; background: #333; border: 1px solid #aaa; font: 700 10px/14px "Inter", sans-serif; text-align: center; }
.showdesk { margin-left: 20px; margin-right: 4px; width: 1px; height: 40px; background: #777; }
```
